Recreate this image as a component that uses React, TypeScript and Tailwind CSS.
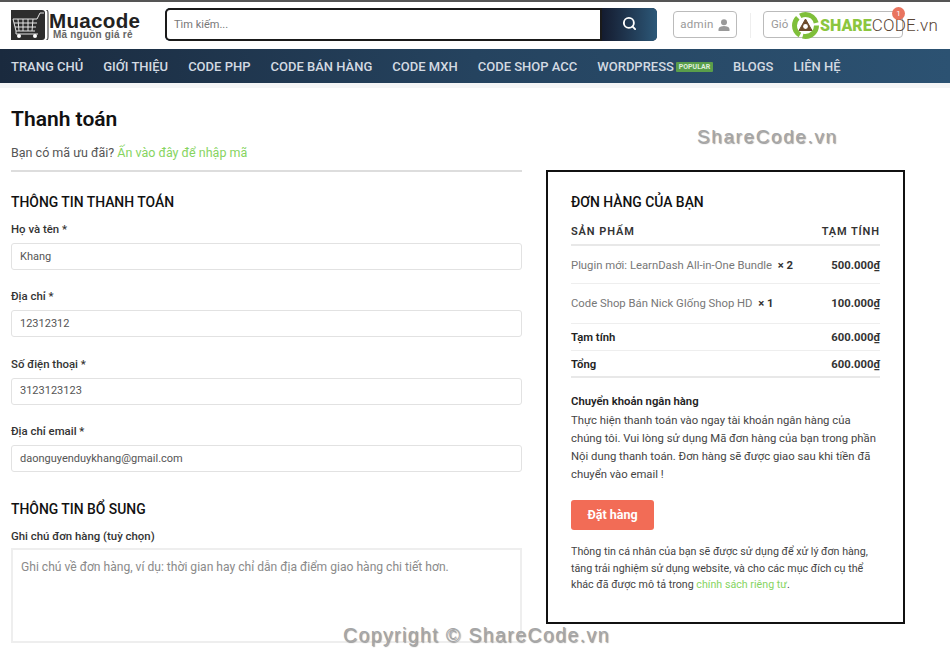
import { Search } from 'lucide-react';

const navItems = ['TRANG CHỦ', 'GIỚI THIỆU', 'CODE PHP', 'CODE BÁN HÀNG', 'CODE MXH', 'CODE SHOP ACC'];
const fields = [
  { label: 'Họ và tên *', value: 'Khang' },
  { label: 'Địa chỉ *', value: '12312312' },
  { label: 'Số điện thoại *', value: '3123123123' },
  { label: 'Địa chỉ email *', value: 'daonguyenduykhang@gmail.com' },
];

function CartLogo() {
  return (
    <svg width="38" height="30" viewBox="0 0 38 30" className="shrink-0">
      <path d="M0 0H31Q34 0 34 3V27Q34 30 31 30H0Z" fill="#2d2d2d" />
      <path d="M35 0H36Q37 0 37 3V27Q37 30 36 30H35" fill="none" stroke="#2d2d2d" strokeWidth="1" />
      <path d="M2 9H26L29 3H33M3 13H26M4 17H25M5 21H24M7 9L8 21M12 9V21M17 9V21M22 9L21 21M2 9L5 21V24H27" stroke="#e4e4e4" strokeWidth="1" fill="none" />
      <circle cx="8" cy="26" r="2" fill="#fff" />
      <circle cx="24" cy="26" r="2" fill="#fff" />
    </svg>
  );
}

function ShareCodeLogo() {
  return (
    <div className="absolute left-[792px] top-[12px] flex items-center">
      <svg width="27" height="27" viewBox="0 0 27 27">
        <circle cx="13.5" cy="13.5" r="11" fill="#fff" stroke="#7fbf3a" strokeWidth="5" strokeDasharray="20 3" />
        <path d="M13.5 7L20 18.5H7Z" fill="#6b4a2a" stroke="#6b4a2a" strokeWidth="1" strokeLinejoin="round" />
        <circle cx="13.5" cy="14.5" r="2.4" fill="#fff" />
      </svg>
      <span className="ml-px font-['Roboto',sans-serif] text-[16px] leading-none font-black text-[#8cc63f]">SHARE</span>
      <span className="font-['Roboto',sans-serif] text-[17px] leading-none font-light tracking-[0.2px] text-[#5a4636]">CODE.vn</span>
    </div>
  );
}

function Header() {
  return (
    <div className="flex h-[49px] items-start border-t-2 border-[#555] bg-white pl-[11px]">
      <div className="mt-[8px] flex w-[154px] shrink-0">
        <CartLogo />
        <div className="font-['Liberation_Sans',sans-serif] font-bold">
          <div className="text-[20.6px] leading-[22px] tracking-[0.3px] text-[#222]">Muacode</div>
          <div className="-mt-[2px] pl-[4px] text-[10px] leading-[9px] tracking-[0.2px] text-[#666]">Mã nguồn giá rẻ</div>
        </div>
      </div>
      <div className="mt-[6px] flex h-[33px] w-[492px] shrink-0 overflow-hidden rounded-[5px] bg-[#1d2d44]">
        <div className="flex flex-1 items-center rounded-l-[5px] border-2 border-[#1a1a1a] bg-white pt-[2px] pl-[7px] text-[11px] text-[#777]">Tìm kiếm...</div>
        <div className="flex w-[55px] items-center justify-center bg-gradient-to-r from-[#141c30] to-[#2c5878] pb-[2px]">
          <Search size={15} strokeWidth={3} className="text-white" />
        </div>
      </div>
      <div className="mt-[9px] ml-[16px] flex h-[27px] w-[64px] shrink-0 items-center justify-center gap-[4px] rounded-[4px] border border-[#bbb] text-[11.5px] tracking-[0.3px] text-[#999]">
        admin
        <svg width="12" height="12" viewBox="0 0 12 12" fill="#999">
          <circle cx="6" cy="3.2" r="3" />
          <path d="M0.5 12V10Q0.5 8 3 7.5L6 7L9 7.5Q11.5 8 11.5 10V12Z" />
        </svg>
      </div>
      <div className="mt-[11px] ml-[13px] h-[25px] w-px shrink-0 bg-[#eee]" />
      <div className="mt-[9px] ml-[12px] flex h-[27px] w-[140px] shrink-0 items-center rounded-[4px] border border-[#bbb] pl-[7px] text-[11.5px] text-[#999]">Giỏ</div>
    </div>
  );
}

function Nav() {
  return (
    <div className="flex h-[34px] items-center gap-[20px] bg-gradient-to-r from-[#1a2a3e] via-[#25435f] to-[#2c5272] pt-px pl-[11px] text-[13px] font-medium text-[#d3dae2]">
      {navItems.map(item => (
        <span key={item}>{item}</span>
      ))}
      <span className="flex items-center gap-[2px]">
        WORDPRESS
        <span className="flex w-[37px] justify-center rounded-[1px] bg-[#5a9e4a] text-[7px] leading-[10px] font-bold text-[#dfeedd]">POPULAR</span>
      </span>
      <span>BLOGS</span>
      <span>LIÊN HỆ</span>
    </div>
  );
}

function CheckoutForm() {
  return (
    <div className="w-[511px] shrink-0">
      <h1 className="mt-[18px] text-[21px] leading-[26px] font-semibold text-[#111]">Thanh toán</h1>
      <p className="mt-[11px] border-b-2 border-[#ddd] pb-[7px] text-[12.5px] leading-[20px] text-[#555]">
        Bạn có mã ưu đãi? <span className="text-[#86d45f]">Ấn vào đây để nhập mã</span>
      </p>
      <h2 className="mt-[20px] text-[13.9px] leading-[20px] font-medium text-[#111]">THÔNG TIN THANH TOÁN</h2>
      <div className="mt-[8px] flex flex-col gap-[17.33px]">
        {fields.map(f => (
          <div key={f.label}>
            <div className="text-[11.4px] leading-[18px] font-medium text-[#333]">{f.label}</div>
            <div className="mt-[5px] flex h-[27px] items-center rounded-[3px] border border-[#e2e2e2] pt-px pl-[8px] text-[11px] text-[#555]">{f.value}</div>
          </div>
        ))}
      </div>
      <h2 className="mt-[27px] text-[13.9px] leading-[20px] font-medium text-[#111]">THÔNG TIN BỔ SUNG</h2>
      <div className="mt-[8px] text-[11.4px] leading-[18px] font-medium text-[#333]">Ghi chú đơn hàng (tuỳ chọn)</div>
      <div className="mt-[3px] h-[95px] border-2 border-[#eee] pt-[8px] pl-[8px] text-[12.1px] leading-[18px] text-[#8a8a8a]">
        Ghi chú về đơn hàng, ví dụ: thời gian hay chỉ dẫn địa điểm giao hàng chi tiết hơn.
      </div>
    </div>
  );
}

function OrderBox() {
  return (
    <div className="mt-[82px] ml-[24px] h-[454px] w-[359px] shrink-0 border-2 border-[#111] px-[23px] pt-[20px]">
      <h2 className="text-[13.9px] leading-[20px] font-medium text-[#111]">ĐƠN HÀNG CỦA BẠN</h2>
      <div className="mt-[11px] flex justify-between border-b-2 border-[#e8e8e8] pb-[3px] text-[11px] leading-[18px] font-semibold tracking-[0.9px] text-[#333]">
        <span>SẢN PHẨM</span>
        <span>TẠM TÍNH</span>
      </div>
      <div className="flex h-[38px] items-center justify-between border-b border-[#eee] pt-[3px] text-[11.3px] font-bold text-[#333]">
        <span><span className="font-normal text-[#777]">Plugin mới: LearnDash All-in-One Bundle</span>&nbsp; × 2</span>
        <span>500.000₫</span>
      </div>
      <div className="flex h-[40px] items-center justify-between border-b border-[#eee] pt-[2px] text-[11.3px] font-bold text-[#333]">
        <span><span className="font-normal text-[#777]">Code Shop Bán Nick GIống Shop HD</span>&nbsp; × 1</span>
        <span>100.000₫</span>
      </div>
      <div className="flex h-[27px] items-center justify-between border-b border-[#eee] pt-[2px] text-[11.3px] font-bold text-[#333]">
        <span className="font-semibold text-[#222]">Tạm tính</span>
        <span>600.000₫</span>
      </div>
      <div className="flex h-[27px] items-center justify-between border-b-2 border-[#e8e8e8] pt-[3px] text-[11.3px] font-bold text-[#333]">
        <span className="font-semibold text-[#222]">Tổng</span>
        <span>600.000₫</span>
      </div>
      <div className="mt-[14px] text-[11.3px] leading-[20px] font-semibold text-[#222]">Chuyển khoản ngân hàng</div>
      <p className="text-[11.3px] leading-[18px] text-[#444]">
        Thực hiện thanh toán vào ngay tài khoản ngân hàng của chúng tôi. Vui lòng sử dụng Mã đơn hàng của bạn trong phần Nội dung thanh toán. Đơn hàng sẽ được giao sau khi tiền đã chuyển vào email !
      </p>
      <button className="mt-[16px] flex h-[30px] w-[83px] items-center justify-center rounded-[3px] bg-[#f26c56] text-[12.5px] font-bold text-white">Đặt hàng</button>
      <p className="mt-[14px] text-[10.7px] leading-[16.5px] text-[#444]">
        Thông tin cá nhân của bạn sẽ được sử dụng để xử lý đơn hàng, tăng trải nghiệm sử dụng website, và cho các mục đích cụ thể khác đã được mô tả trong <span className="text-[#86d45f]">chính sách riêng tư</span>.
      </p>
    </div>
  );
}

export default function App() {
  return (
    <div className="relative h-[669px] w-[950px] overflow-hidden bg-white font-['Roboto',sans-serif]">
      <Header />
      <Nav />
      <div className="h-[5px] bg-[#f4f5f6]" />
      <div className="flex pl-[11px]">
        <CheckoutForm />
        <OrderBox />
      </div>
      <ShareCodeLogo />
      <span className="absolute top-[126px] left-[697px] font-['Liberation_Sans',sans-serif] text-[19px] leading-[21px] tracking-[1.6px] text-[#a5a5a5] [text-shadow:1px_1px_1px_#999]">ShareCode.vn</span>
      <span className="absolute top-[624px] left-[343px] font-['Liberation_Sans',sans-serif] text-[19.5px] leading-[22px] tracking-[1.4px] text-[#a5a5a5] [text-shadow:1px_1px_1px_#999]">Copyright © ShareCode.vn</span>
      <span className="absolute top-[7px] left-[892px] flex h-[13px] w-[13px] items-center justify-center rounded-full bg-[#e9745f] text-[8px] text-white">1</span>
    </div>
  );
}
